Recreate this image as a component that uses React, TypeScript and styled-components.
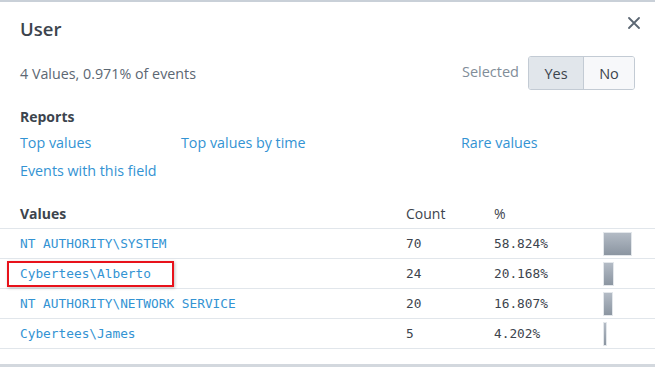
import styled, { createGlobalStyle } from "styled-components";

const GlobalStyle = createGlobalStyle`
  body {
    margin: 0;
    background: #ffffff;
    font-family: "Open Sans", Lato, sans-serif;
    color: #3c444d;
  }
`;

const Modal = styled.div`
  width: 655px;
  height: 367px;
  border-top: 2px solid #c9d0d8;
  box-sizing: border-box;
  background: #fff;
  overflow: hidden;
`;

const Header = styled.div`
  display: flex;
  justify-content: space-between;
  align-items: center;
  padding: 15px 13px 0 20px;
  height: 24px;
`;

const Title = styled.h2`
  margin: 0;
  font-size: 18.5px;
  font-weight: 600;
  line-height: 24px;
  color: #3c444d;
`;

const CloseBtn = styled.button`
  border: none;
  background: none;
  padding: 0;
  width: 16px;
  height: 16px;
  margin-top: -12px;
  display: flex;
  align-items: center;
  justify-content: center;
  cursor: pointer;
`;

const Summary = styled.div`
  display: flex;
  justify-content: space-between;
  align-items: center;
  margin-top: 15px;
  padding: 0 20px;
  height: 34px;
`;

const SummaryText = styled.span`
  font-size: 14.3px;
  color: #5c6773;
`;

const SelectedGroup = styled.div`
  display: flex;
  align-items: center;
  gap: 9px;
`;

const SelectedLabel = styled.span`
  font-size: 14.5px;
  color: #818d99;
  margin-top: -4px;
`;

const Toggle = styled.div`
  display: flex;
  height: 34px;
  border: 1px solid #c3cbd4;
  border-radius: 3px;
  box-sizing: border-box;
  overflow: hidden;
`;

const ToggleOption = styled.button<{ $active?: boolean; $w: number }>`
  width: ${(p) => p.$w}px;
  border: none;
  margin: 0;
  padding: 0;
  font-family: inherit;
  font-size: 14.5px;
  color: #3c444d;
  background: ${(p) => (p.$active ? "#e1e6eb" : "#f7f8fa")};
  & + & {
    border-left: 1px solid #c3cbd4;
  }
`;

const Reports = styled.div`
  margin-top: 17px;
  padding: 0 20px;
`;

const SectionTitle = styled.div`
  font-size: 14px;
  font-weight: 700;
  line-height: 20px;
  color: #3c444d;
`;

const LinkGrid = styled.div`
  display: grid;
  grid-template-columns: 161px 280px 1fr;
  row-gap: 8px;
  margin-top: 6px;
`;

const ReportLink = styled.a`
  font-size: 14.3px;
  line-height: 20px;
  color: #3393d3;
  text-decoration: none;
  cursor: pointer;
`;

const Table = styled.table`
  width: 100%;
  margin-top: 18px;
  border-collapse: collapse;
`;

const HeadCell = styled.th<{ $w?: number; $bold?: boolean }>`
  text-align: left;
  font-size: 14px;
  font-weight: ${(p) => (p.$bold ? 700 : 400)};
  color: #3c444d;
  height: 29px;
  padding: 0;
  width: ${(p) => (p.$w ? `${p.$w}px` : "auto")};
  border-bottom: 1px solid #e1e6eb;
  &:first-child {
    padding-left: 20px;
  }
`;

const Row = styled.tr`
  height: 30px;
  border-bottom: 1px solid #e1e6eb;
`;

const Cell = styled.td`
  padding: 0;
  font-family: "DejaVu Sans Mono", "Liberation Mono", monospace;
  font-size: 12.8px;
  color: #3c444d;
  vertical-align: middle;
`;

const ValueCell = styled(Cell)`
  padding-left: 20px;
  position: relative;
`;

const ValueLink = styled.a`
  color: #3393d3;
  text-decoration: none;
  cursor: pointer;
`;

const Annotation = styled.span`
  position: absolute;
  left: 7px;
  top: 2px;
  width: 167px;
  height: 26px;
  border: 2px solid #e8121b;
  box-sizing: border-box;
  box-shadow: 1px 1px 3px rgba(0, 0, 0, 0.25);
  pointer-events: none;
`;

const BarCell = styled.td`
  padding: 0;
  vertical-align: middle;
`;

const Bar = styled.div`
  height: 22px;
  background: linear-gradient(#b3bbc5, #8b95a1);
  box-shadow: 0 0 0 1px #e3e7eb;
`;

const Footer = styled.div`
  margin-top: 15px;
  border-top: 3px solid #d3d8de;
`;

const values = [
  { name: "NT AUTHORITY\\SYSTEM", count: 70, pct: 58.824 },
  { name: "Cybertees\\Alberto", count: 24, pct: 20.168, marked: true },
  { name: "NT AUTHORITY\\NETWORK SERVICE", count: 20, pct: 16.807 },
  { name: "Cybertees\\James", count: 5, pct: 4.202 },
];

const maxPct = Math.max(...values.map((v) => v.pct));

export default function App() {
  return (
    <>
      <GlobalStyle />
      <Modal>
        <Header>
          <Title>User</Title>
          <CloseBtn aria-label="Close">
            <svg width="12" height="12" viewBox="0 0 12 12">
              <path d="M1 1L11 11M11 1L1 11" stroke="#5c6773" strokeWidth="1.8" strokeLinecap="round" />
            </svg>
          </CloseBtn>
        </Header>

        <Summary>
          <SummaryText>4 Values, 0.971% of events</SummaryText>
          <SelectedGroup>
            <SelectedLabel>Selected</SelectedLabel>
            <Toggle>
              <ToggleOption $active $w={54}>Yes</ToggleOption>
              <ToggleOption $w={51}>No</ToggleOption>
            </Toggle>
          </SelectedGroup>
        </Summary>

        <Reports>
          <SectionTitle>Reports</SectionTitle>
          <LinkGrid>
            <ReportLink>Top values</ReportLink>
            <ReportLink>Top values by time</ReportLink>
            <ReportLink>Rare values</ReportLink>
            <ReportLink>Events with this field</ReportLink>
          </LinkGrid>
        </Reports>

        <Table>
          <thead>
            <tr>
              <HeadCell $w={386} $bold>Values</HeadCell>
              <HeadCell $w={88}>Count</HeadCell>
              <HeadCell $w={110}>%</HeadCell>
              <HeadCell />
            </tr>
          </thead>
          <tbody>
            {values.map((v) => (
              <Row key={v.name}>
                <ValueCell>
                  <ValueLink>{v.name}</ValueLink>
                  {v.marked && <Annotation />}
                </ValueCell>
                <Cell>{v.count}</Cell>
                <Cell>{v.pct.toFixed(3)}%</Cell>
                <BarCell>
                  <Bar style={{ width: Math.max(2, Math.round((v.pct / maxPct) * 27)) }} />
                </BarCell>
              </Row>
            ))}
          </tbody>
        </Table>
        <Footer />
      </Modal>
    </>
  );
}
